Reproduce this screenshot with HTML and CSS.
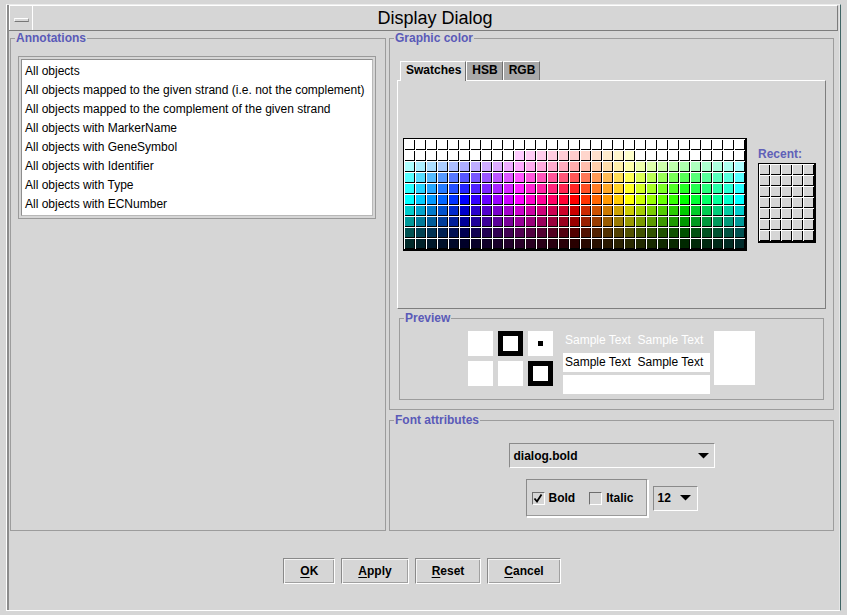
FILE: index.html
```html
<!DOCTYPE html>
<html>
<head>
<meta charset="utf-8">
<title>Display Dialog</title>
<link rel="stylesheet" href="styles.css">
</head>
<body>
<div class="frame">
  <div class="window">
    <div class="titlebar">
      <div class="menu-btn"><span class="menu-bar"></span></div>
      <div class="title">Display Dialog</div>
    </div>
    <div class="main">
      <fieldset class="group annotations">
        <legend>Annotations</legend>
        <div class="listbox">
          <ul class="list">
            <li>All objects</li>
            <li>All objects mapped to the given strand (i.e. not the complement)</li>
            <li>All objects mapped to the complement of the given strand</li>
            <li>All objects with MarkerName</li>
            <li>All objects with GeneSymbol</li>
            <li>All objects with Identifier</li>
            <li>All objects with Type</li>
            <li>All objects with ECNumber</li>
          </ul>
        </div>
      </fieldset>
      <div class="right-col">
        <fieldset class="group graphic">
          <legend>Graphic color</legend>
          <div class="tabs">
            <div class="tab active">Swatches</div>
            <div class="tab">HSB</div>
            <div class="tab">RGB</div>
          </div>
          <div class="tab-panel">
            <div class="swatches" id="swatches"></div>
            <div class="recent">
              <div class="recent-label">Recent:</div>
              <div class="recent-grid" id="recent"></div>
            </div>
          </div>
          <fieldset class="group preview">
            <legend>Preview</legend>
            <div class="preview-body">
              <div class="squares">
                <div class="sq"></div>
                <div class="sq sq-frame"></div>
                <div class="sq sq-dot"><span class="dot"></span></div>
                <div class="sq"></div>
                <div class="sq"></div>
                <div class="sq sq-frame"></div>
              </div>
              <div class="samples">
                <div class="sample sample-light">Sample Text&nbsp; Sample Text</div>
                <div class="sample sample-box">Sample Text&nbsp; Sample Text</div>
                <div class="sample sample-box"></div>
              </div>
              <div class="big-sq"></div>
            </div>
          </fieldset>
        </fieldset>
        <fieldset class="group fontattr">
          <legend>Font attributes</legend>
          <div class="combo combo-font">
            <span>dialog.bold</span>
            <svg class="arrow" width="11" height="6" viewBox="0 0 11 6"><polygon points="0,0 11,0 5.5,5.5" fill="#000"/></svg>
          </div>
          <div class="font-row">
            <div class="checkgroup">
              <label class="check"><span class="box"><svg width="10" height="10" viewBox="0 0 10 10"><path d="M1.5 5.5 L4 8.5 L8.5 1.5" fill="none" stroke="#000" stroke-width="1.8"/></svg></span>Bold</label>
              <label class="check"><span class="box"></span>Italic</label>
            </div>
            <div class="combo combo-size">
              <span>12</span>
              <svg class="arrow" width="11" height="6" viewBox="0 0 11 6"><polygon points="0,0 11,0 5.5,5.5" fill="#000"/></svg>
            </div>
          </div>
        </fieldset>
      </div>
    </div>
    <div class="buttons">
      <button class="btn"><u>O</u>K</button>
      <button class="btn"><u>A</u>pply</button>
      <button class="btn"><u>R</u>eset</button>
      <button class="btn"><u>C</u>ancel</button>
    </div>
  </div>
</div>
<script src="app.js"></script>
</body>
</html>
```
FILE: styles.css
```css
* { box-sizing: border-box; }
html, body { margin: 0; padding: 0; }
body {
  background: #d6d6d6;
  font-family: "Liberation Sans", Arial, sans-serif;
  font-size: 12px;
  color: #000;
  width: 847px;
  height: 615px;
  overflow: hidden;
}
.frame {
  margin: 4px 0 0 6px;
  width: 835px;
  height: 607px;
  display: flex;
  border-top: 1px solid #ececec;
  border-left: 1px solid #fff;
  border-right: 1px solid #3f6464;
  border-bottom: 1px solid #fff;
}
.window {
  flex: 1;
  display: flex;
  flex-direction: column;
  border-left: 2px solid #8c8c8c;
  border-right: 1px solid #e6e6e6;
}
.titlebar {
  height: 26px;
  margin-right: 1px;
  display: flex;
  border-top: 1px solid #fff;
  border-bottom: 1px solid #7c7c7c;
  border-right: 1px solid #7c7c7c;
}
.menu-btn {
  width: 24px;
  border-left: 1px solid #fff;
  border-right: 1px solid #fff;
  display: flex;
  align-items: center;
  justify-content: center;
  padding-top: 3px;
}
.menu-bar {
  width: 15px;
  height: 4px;
  border-top: 1px solid #fff;
  border-bottom: 1px solid #777;
  border-left: 1px solid #f4f4f4;
  border-right: 1px solid #999;
  background: #d6d6d6;
}
.title {
  flex: 1;
  text-align: center;
  font-size: 18px;
  line-height: 24px;
}
.main {
  height: 500px;
  display: flex;
  gap: 3px;
  padding: 0 4px 0 1px;
}
fieldset.group {
  margin: 0;
  padding: 0;
  min-width: 0;
  border: 1px solid #9c9c9c;
}
fieldset.group > legend {
  margin-left: 4px;
  padding: 0 1px;
  font-weight: bold;
  font-size: 12px;
  line-height: 14px;
  color: #5a5ab8;
}
fieldset.annotations { width: 376px; }
.listbox {
  margin: 11px 9px 0 7px;
  border: 1px solid #9a9a9a;
  padding: 2px;
}
.list {
  list-style: none;
  margin: 0;
  padding: 2px 0 1px 3px;
  background: #fff;
  border: 1px solid #8e8e8e;
  border-right-color: #b8b8b8;
  border-bottom-color: #b8b8b8;
}
.list li {
  line-height: 19px;
  height: 19px;
  white-space: nowrap;
}
.right-col {
  width: 445px;
  display: flex;
  flex-direction: column;
  gap: 3px;
}
fieldset.graphic { height: 379px; }
fieldset.fontattr { height: 118px; }
.tabs {
  display: flex;
  margin: 16px 0 0 10px;
  height: 19px;
}
.tab {
  height: 19px;
  padding: 0 4px 0 5px;
  line-height: 17px;
  font-weight: bold;
  background: #a9a9a9;
  border: 1px solid;
  border-color: #fff #6e6e6e transparent #fff;
  border-bottom: 0;
}
.tab.active {
  height: 20px;
  margin-bottom: -1px;
  position: relative;
  z-index: 1;
  background: #d6d6d6;
}
.tab-panel {
  margin: 0 7px;
  height: 229px;
  border: 1px solid;
  border-color: #fff #7e7e7e #7e7e7e #fff;
  display: flex;
  align-items: center;
  padding-left: 5px;
  gap: 11px;
}
.swatches {
  display: grid;
  grid-template-columns: repeat(31, 10px);
  grid-auto-rows: 10px;
  gap: 1px;
  padding: 1px 0 0 1px;
  background: #fff;
  border: 1px solid #000;
  border-right-width: 2px;
  border-bottom-width: 2px;
}
.sw {
  width: 10px;
  height: 10px;
  box-shadow: inset -1px -1px 0 #000;
}
.sw.rc { background: #d6d6d6; }
.recent {
  display: flex;
  flex-direction: column;
}
.recent-label {
  font-weight: bold;
  line-height: 14px;
  color: #6060b8;
  margin-bottom: 2px;
}
.recent-grid {
  display: grid;
  grid-template-columns: repeat(5, 10px);
  grid-auto-rows: 10px;
  gap: 1px;
  padding: 1px 0 0 1px;
  background: #fff;
  border: 1px solid #000;
  border-right-width: 2px;
  border-bottom-width: 2px;
}
fieldset.preview {
  height: 89px;
  margin: 2px 9px 0 9px;
}
.preview-body {
  display: flex;
  justify-content: center;
  align-items: flex-start;
  padding-top: 6px;
}
.squares {
  display: grid;
  grid-template-columns: repeat(3, 25px);
  grid-auto-rows: 25px;
  gap: 5px;
}
.sq {
  background: #fff;
  display: flex;
  align-items: center;
  justify-content: center;
}
.sq-frame { border: 5px solid #000; }
.dot { width: 5px; height: 5px; background: #000; }
.samples {
  width: 147px;
  margin-left: 10px;
  display: flex;
  flex-direction: column;
  gap: 3px;
}
.sample {
  height: 19px;
  line-height: 19px;
  padding-left: 2px;
  white-space: nowrap;
}
.sample-light { color: #fff; }
.sample-box { background: #fff; }
.big-sq {
  width: 41px;
  height: 54px;
  margin-left: 4px;
  background: #fff;
}
.combo {
  height: 25px;
  display: flex;
  align-items: center;
  justify-content: space-between;
  font-weight: bold;
  border: 1px solid;
  border-color: #8a8a8a #fff #fff #8a8a8a;
}
.combo-font {
  width: 206px;
  margin: 16px auto 0;
  padding: 0 5px 0 4px;
}
.combo-size {
  width: 45px;
  padding: 0 6px 0 4px;
}
.font-row {
  margin-top: 11px;
  display: flex;
  justify-content: center;
  align-items: center;
  gap: 5px;
}
.checkgroup {
  width: 122px;
  height: 38px;
  display: flex;
  align-items: center;
  padding-left: 5px;
  gap: 14px;
  border: 1px solid;
  border-color: #8a8a8a #fff #fff #8a8a8a;
  box-shadow: inset -1px -1px 0 #9a9a9a, 1px 1px 0 #fff;
}
.check {
  display: flex;
  align-items: center;
  font-weight: bold;
  gap: 4px;
}
.box {
  width: 13px;
  height: 13px;
  display: flex;
  align-items: center;
  justify-content: center;
  border: 1px solid;
  border-color: #6e6e6e #fff #fff #6e6e6e;
}
.buttons {
  flex: 1;
  display: flex;
  justify-content: center;
  align-items: center;
  gap: 6px;
  padding-right: 4px;
}
.btn {
  height: 26px;
  padding: 0 16px;
  margin: 0;
  font-family: "Liberation Sans", Arial, sans-serif;
  font-size: 12px;
  font-weight: bold;
  color: #000;
  background: #d6d6d6;
  border: 1px solid;
  border-color: #8a8a8a #fff #fff #8a8a8a;
  box-shadow: inset 1px 1px 0 #f4f4f4, inset -1px -1px 0 #a0a0a0;
}
.btn u { text-underline-offset: 2px; }
```
FILE: app.js
```js
(function () {
  var grid = document.getElementById('swatches');
  var L = [100, 90, 84, 67, 57, 50, 40, 30, 16, 8];
  for (var r = 0; r < 10; r++) {
    for (var c = 0; c < 31; c++) {
      var d = document.createElement('div');
      d.className = 'sw';
      var hue = (180 + 12 * c) % 360;
      var col;
      if (r === 0) col = '#ffffff';
      else if (r === 1) col = (c >= 10 && c <= 20) ? 'hsl(' + hue + ',100%,90%)' : '#ffffff';
      else col = 'hsl(' + hue + ',100%,' + L[r] + '%)';
      d.style.background = col;
      grid.appendChild(d);
    }
  }
  var rec = document.getElementById('recent');
  for (var i = 0; i < 35; i++) {
    var e = document.createElement('div');
    e.className = 'sw rc';
    rec.appendChild(e);
  }
})();
```
